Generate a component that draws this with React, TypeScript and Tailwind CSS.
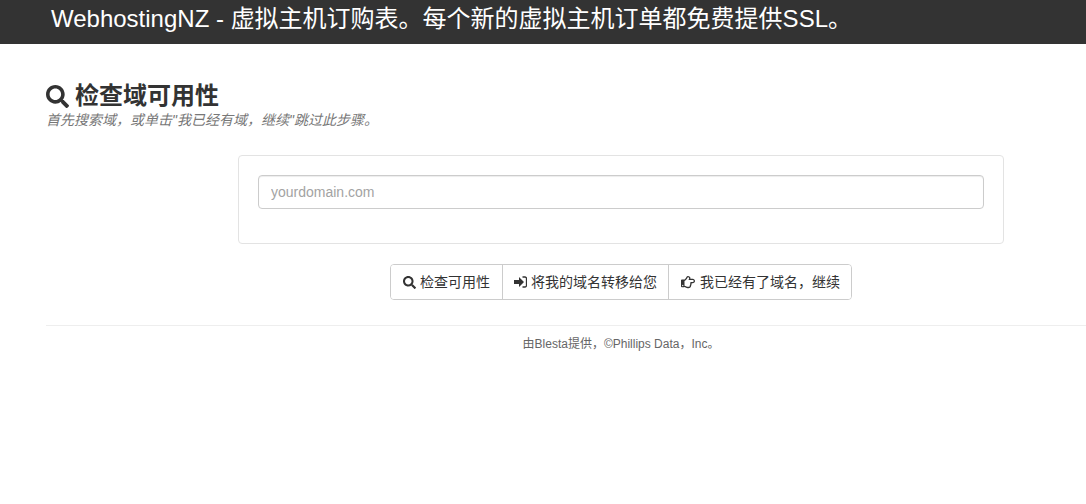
import { FaSearch, FaRegHandPointRight } from 'react-icons/fa';

// fa-sign-in from the old icon set, the package only has the newer heavier one
const SignInIcon = () => (
  <svg width="13" height="12" viewBox="0 0 13 12">
    <path d="M0 4h5V1l5 5-5 5V8H0z" fill="currentColor" />
    <path d="M8.5 1H11a1.5 1.5 0 0 1 1.5 1.5v7A1.5 1.5 0 0 1 11 11H8.5" fill="none" stroke="currentColor" strokeWidth="1.3" />
  </svg>
);

const App = () => {
  const buttons = [
    { icon: <FaSearch size={13} />, label: "检查可用性", spacing: "gap-[4px] px-3" },
    { icon: <SignInIcon />, label: "将我的域名转移给您", spacing: "gap-[4px] px-[11px]" },
    { icon: <FaRegHandPointRight size={14} />, label: "我已经有了域名\uFF0C继续", spacing: "gap-[5px] pl-3 pr-[11px]" }
  ];

  return (
    <div className="min-h-[504px] bg-white text-[#333] font-['Liberation_Sans','Noto_Sans_CJK_SC',sans-serif]">
      <header className="h-11 bg-[#333] pl-[51px] overflow-hidden">
        <h1 className="text-2xl leading-[38px] text-white whitespace-nowrap">
          WebhostingNZ - 虚拟主机订购表。每个新的虚拟主机订单都免费提供SSL。
        </h1>
      </header>

      <main className="pl-[46px] pt-[37px]">
        <div className="flex items-center gap-[6px] h-[30px]">
          <FaSearch size={23} className="text-[#333]" />
          <h2 className="text-2xl font-bold leading-[30px]">检查域可用性</h2>
        </div>
        <p className="text-sm leading-5 italic text-[#777] -mt-[1px]">
          {"首先搜索域\uFF0C或单击\"我已经有域\uFF0C继续\"跳过此步骤。"}
        </p>

        <div className="ml-[192px] w-[766px] mt-[25px]">
          <div className="h-[89px] rounded border border-[#e3e3e3] px-[19px] pt-[19px]">
            <input
              type="text"
              placeholder="yourdomain.com"
              className="block w-full h-[34px] rounded border border-[#ccc] px-3 text-sm text-[#555] placeholder:text-[#a3a3a3] outline-none shadow-[inset_0_1px_1px_rgba(0,0,0,0.075)]"
            />
          </div>

          <div className="flex justify-center mt-5">
            <div className="flex h-9 rounded border border-[#ccc] divide-x divide-[#ccc] overflow-hidden">
              {buttons.map((button, index) => (
                <button key={index} className={`flex items-center ${button.spacing} text-sm text-[#333] bg-white whitespace-nowrap`}>
                  {button.icon}
                  <span>{button.label}</span>
                </button>
              ))}
            </div>
          </div>
        </div>

        <hr className="mt-[25px] border-t border-[#eee]" />
        <p className="mt-[10px] pl-[110px] text-center text-xs leading-[17px] text-[#666]">
          {"由Blesta提供\uFF0C©Phillips Data\uFF0CInc。"}
        </p>
      </main>
    </div>
  );
};

export default App;
